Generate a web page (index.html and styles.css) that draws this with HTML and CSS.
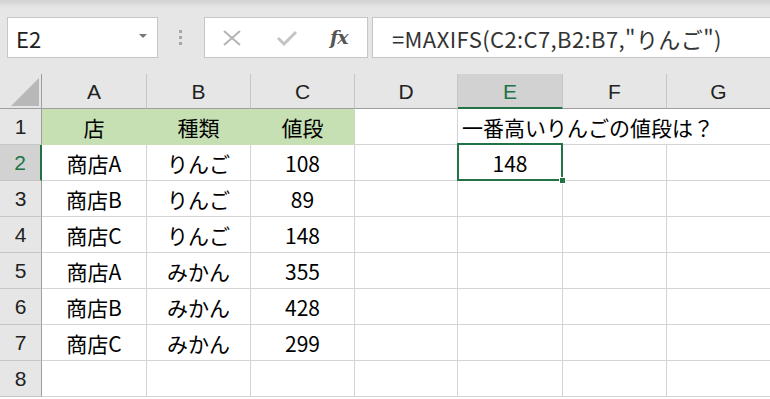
FILE: index.html
```html
<!DOCTYPE html>
<html lang="ja">
  <head>
    <meta charset="UTF-8" />
    <meta name="viewport" content="width=device-width, initial-scale=1.0" />
    <title>MAXIFS</title>
    <link rel="stylesheet" href="styles.css">
  </head>
  <body>
    <div class="toolbar">
      <div class="namebox">
        <span>E2</span>
        <span class="caret"></span>
      </div>
      <div class="grip"><i></i><i></i><i></i></div>
      <div class="buttons">
        <svg class="icon" width="18" height="16" viewBox="0 0 18 16">
          <path d="M1 1 L17 15 M17 1 L1 15" stroke="#b4b4b4" stroke-width="2" fill="none" />
        </svg>
        <svg class="icon" width="20" height="16" viewBox="0 0 20 16">
          <path d="M1 8 L7 14 L19 2" stroke="#c4c4c4" stroke-width="3" fill="none" />
        </svg>
        <span class="fx">fx</span>
      </div>
      <div class="formula">=MAXIFS(C2:C7,B2:B7,"りんご")</div>
    </div>

    <div class="sheet">
      <div class="corner"><span class="tri"></span></div>
      <div class="colhead">A</div>
      <div class="colhead">B</div>
      <div class="colhead">C</div>
      <div class="colhead">D</div>
      <div class="colhead active">E</div>
      <div class="colhead">F</div>
      <div class="colhead">G</div>

      <div class="rowhead">1</div>
      <div class="cell fill">店</div>
      <div class="cell fill">種類</div>
      <div class="cell fill">値段</div>
      <div class="cell"></div>
      <div class="cell note">一番高いりんごの値段は？</div>

      <div class="rowhead active">2</div>
      <div class="cell">商店A</div>
      <div class="cell">りんご</div>
      <div class="cell">108</div>
      <div class="cell"></div>
      <div class="cell sel">148<span class="handle"></span></div>
      <div class="cell"></div>
      <div class="cell"></div>

      <div class="rowhead">3</div>
      <div class="cell">商店B</div>
      <div class="cell">りんご</div>
      <div class="cell">89</div>
      <div class="cell"></div>
      <div class="cell"></div>
      <div class="cell"></div>
      <div class="cell"></div>

      <div class="rowhead">4</div>
      <div class="cell">商店C</div>
      <div class="cell">りんご</div>
      <div class="cell">148</div>
      <div class="cell"></div>
      <div class="cell"></div>
      <div class="cell"></div>
      <div class="cell"></div>

      <div class="rowhead">5</div>
      <div class="cell">商店A</div>
      <div class="cell">みかん</div>
      <div class="cell">355</div>
      <div class="cell"></div>
      <div class="cell"></div>
      <div class="cell"></div>
      <div class="cell"></div>

      <div class="rowhead">6</div>
      <div class="cell">商店B</div>
      <div class="cell">みかん</div>
      <div class="cell">428</div>
      <div class="cell"></div>
      <div class="cell"></div>
      <div class="cell"></div>
      <div class="cell"></div>

      <div class="rowhead">7</div>
      <div class="cell">商店C</div>
      <div class="cell">みかん</div>
      <div class="cell">299</div>
      <div class="cell"></div>
      <div class="cell"></div>
      <div class="cell"></div>
      <div class="cell"></div>

      <div class="rowhead">8</div>
      <div class="cell"></div>
      <div class="cell"></div>
      <div class="cell"></div>
      <div class="cell"></div>
      <div class="cell"></div>
      <div class="cell"></div>
      <div class="cell"></div>
    </div>
  </body>
</html>
```

FILE: styles.css
```css
* {
  margin: 0;
  padding: 0;
  box-sizing: border-box;
}

body {
  width: 770px;
  height: 399px;
  overflow: hidden;
  background-color: #ffffff;
  font-family: "Noto Sans CJK JP", "Liberation Sans", sans-serif;
  color: #000000;
}

/* formula bar */

.toolbar {
  height: 74px;
  display: flex;
  align-items: flex-start;
  padding: 17px 0 0 7px;
  background: linear-gradient(#d2d2d2 0, #d8d8d8 3px, #e2e2e2 6px, #e6e6e6 10px);
}

.namebox {
  width: 151px;
  height: 41px;
  background-color: #ffffff;
  border: 1px solid #c6c6c6;
  display: flex;
  align-items: center;
  justify-content: space-between;
  padding: 0 10px 0 8px;
  font-size: 22px;
  color: #222222;
}

.caret {
  width: 0;
  height: 0;
  border-left: 4px solid transparent;
  border-right: 4px solid transparent;
  border-top: 4px solid #777777;
  margin-top: -3px;
}

.grip {
  width: 3px;
  margin: 13px 22px 0 21px;
  display: flex;
  flex-direction: column;
  gap: 3px;
}

.grip i {
  display: block;
  width: 3px;
  height: 3px;
  background-color: #a6a6a6;
}

.buttons {
  width: 164px;
  height: 41px;
  background-color: #ffffff;
  border: 1px solid #c6c6c6;
  display: flex;
  align-items: center;
  padding-left: 18px;
}

.buttons .icon:nth-child(2) {
  margin-left: 36px;
}

.fx {
  margin-left: 33px;
  font-family: "DejaVu Serif", "Liberation Serif", serif;
  font-style: italic;
  font-weight: bold;
  font-size: 19px;
  color: #555555;
  letter-spacing: -1px;
  margin-top: -2px;
}

.formula {
  flex: 1;
  height: 41px;
  margin-left: 4px;
  margin-right: -10px;
  background-color: #ffffff;
  border: 1px solid #c6c6c6;
  display: flex;
  align-items: center;
  padding-left: 19px;
  font-size: 22px;
  letter-spacing: 0.4px;
  color: #333333;
  white-space: nowrap;
}

/* grid */

.sheet {
  display: grid;
  grid-template-columns: 42px 105px 104px 104px 103px 105px 104px 104px;
  grid-template-rows: 35px repeat(8, 36px);
  width: 771px;
}

.corner {
  background-color: #e6e6e6;
  border-right: 1px solid #9e9e9e;
  border-bottom: 1px solid #9e9e9e;
  position: relative;
}

.tri {
  position: absolute;
  left: 11px;
  top: 4px;
  width: 0;
  height: 0;
  border-left: 28px solid transparent;
  border-bottom: 28px solid #b8b8b8;
}

.colhead {
  background-color: #e6e6e6;
  border-right: 1px solid #c6c6c6;
  border-bottom: 1px solid #9e9e9e;
  display: flex;
  align-items: center;
  justify-content: center;
  font-family: "Liberation Sans", "Noto Sans CJK JP", sans-serif;
  font-size: 21px;
  color: #222222;
  padding-top: 2px;
}

.colhead.active {
  background-color: #d2d2d2;
  border-bottom: 2px solid #217346;
  color: #217346;
}

.rowhead {
  background-color: #e6e6e6;
  border-right: 1px solid #9e9e9e;
  border-bottom: 1px solid #c6c6c6;
  display: flex;
  align-items: center;
  justify-content: center;
  font-family: "Liberation Sans", "Noto Sans CJK JP", sans-serif;
  font-size: 21px;
  color: #222222;
}

.rowhead.active {
  background-color: #d2d2d2;
  border-right: 2px solid #217346;
  color: #217346;
}

.cell {
  border-right: 1px solid #d4d4d4;
  border-bottom: 1px solid #d4d4d4;
  display: flex;
  align-items: center;
  justify-content: center;
  font-size: 21px;
  white-space: nowrap;
}

.cell.fill {
  background-color: #c6e0b4;
  border-color: #c6e0b4;
}

.cell.note {
  grid-column: span 3;
  justify-content: flex-start;
  padding-left: 4px;
  border-right: none;
}

.cell.sel {
  position: relative;
}

.cell.sel::after {
  content: "";
  position: absolute;
  top: -2px;
  left: -1px;
  right: -1px;
  bottom: -1px;
  border: 2px solid #217346;
}

.handle {
  position: absolute;
  right: -4px;
  bottom: -4px;
  width: 7px;
  height: 7px;
  background-color: #217346;
  border: 1px solid #ffffff;
  z-index: 2;
}
```
